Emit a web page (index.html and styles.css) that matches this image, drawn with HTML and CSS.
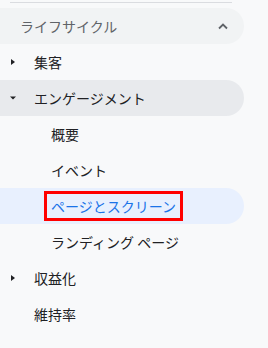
FILE: index.html
```html
<!DOCTYPE html>
<html lang="ja">
<head>
<meta charset="utf-8">
<link rel="stylesheet" href="styles.css">
</head>
<body>
<nav class="nav">
  <div class="divider"></div>
  <div class="row header">
    <span class="header-label">ライフサイクル</span>
    <svg class="chevron" width="12" height="8" viewBox="0 0 12 8"><path d="M2 6.5 L6 2.5 L10 6.5" fill="none" stroke="#5f6368" stroke-width="1.8"/></svg>
  </div>
  <div class="row top">
    <svg class="caret" width="8" height="8" viewBox="0 0 8 8"><polygon points="1,1 5,4 1,7" fill="#202124"/></svg>
    <span>集客</span>
  </div>
  <div class="row top open">
    <svg class="caret" width="8" height="8" viewBox="0 0 8 8"><polygon points="0,2.5 6,2.5 3,5.5" fill="#202124"/></svg>
    <span>エンゲージメント</span>
  </div>
  <div class="row sub"><span>概要</span></div>
  <div class="row sub"><span>イベント</span></div>
  <div class="row sub active"><span class="highlight">ページとスクリーン</span></div>
  <div class="row sub"><span>ランディング ページ</span></div>
  <div class="row top">
    <svg class="caret" width="8" height="8" viewBox="0 0 8 8"><polygon points="1,1 5,4 1,7" fill="#202124"/></svg>
    <span>収益化</span>
  </div>
  <div class="row top">
    <span class="caret-space"></span>
    <span>維持率</span>
  </div>
</nav>
</body>
</html>
```
FILE: styles.css
```css
html, body {
  margin: 0;
  padding: 0;
  background: #f8f9fa;
}
body {
  font-family: "Noto Sans CJK JP", "Noto Sans", sans-serif;
  font-size: 14px;
  color: #202124;
}
.nav {
  width: 268px;
  padding-top: 2px;
}
.divider {
  height: 1px;
  background: #dadce0;
  margin: 0 36px 0 10px;
}
.row {
  box-sizing: border-box;
  width: 244px;
  height: 36px;
  display: flex;
  align-items: center;
  border-radius: 0 18px 18px 0;
  line-height: 20px;
}
.header {
  margin-top: 5px;
  background: #f1f3f4;
  padding-left: 20px;
  justify-content: space-between;
  padding-right: 15px;
  color: #5f6368;
}
.chevron {
  display: block;
}
.top {
  padding-left: 10px;
}
.caret {
  display: block;
  width: 8px;
  height: 8px;
  margin-right: 16px;
}
.caret-space {
  width: 8px;
  margin-right: 16px;
}
.open {
  background: #e8eaed;
}
.sub {
  padding-left: 51px;
}
.active {
  background: #e8f0fe;
  color: #1a73e8;
  padding-left: 44px;
}
.highlight {
  border: 3px solid #ff0000;
  padding: 2px 4px;
  line-height: 20px;
}
```
